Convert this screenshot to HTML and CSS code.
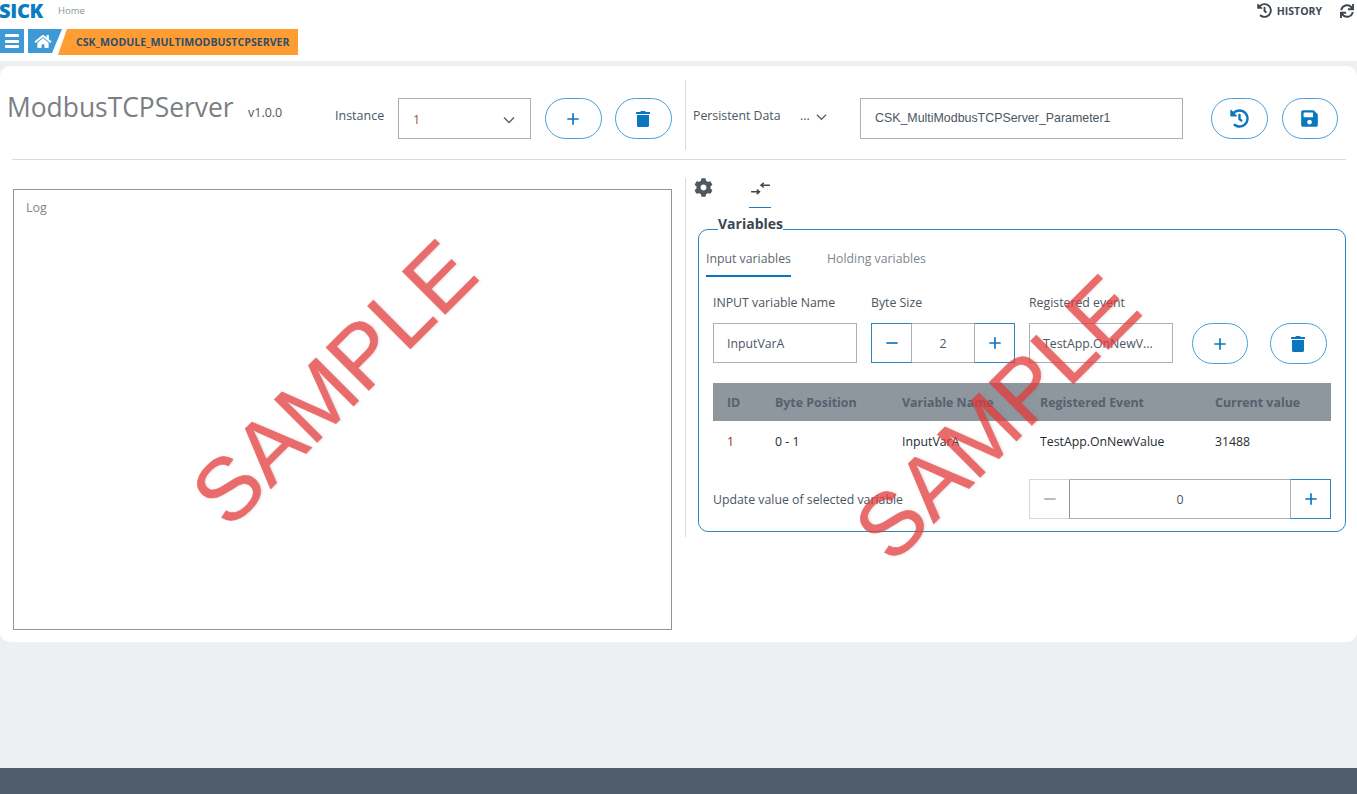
FILE: index.html
```html
<!DOCTYPE html>
<html lang="en">
<head>
<meta charset="utf-8">
<title>ModbusTCPServer</title>
<link rel="stylesheet" href="styles.css">
</head>
<body>
<svg class="defs" aria-hidden="true">
  <symbol id="i-trash" viewBox="0 0 448 512"><path d="M32 464a48 48 0 0 0 48 48h288a48 48 0 0 0 48-48V128H32zM432 32H312l-9.4-18.7A24 24 0 0 0 281.1 0H166.8a23.7 23.7 0 0 0-21.4 13.3L136 32H16A16 16 0 0 0 0 48v32a16 16 0 0 0 16 16h416a16 16 0 0 0 16-16V48a16 16 0 0 0-16-16z"/></symbol>
  <symbol id="i-home" viewBox="0 0 576 512"><path d="M280.37 148.26L96 300.11V464a16 16 0 0 0 16 16l112.06-.29a16 16 0 0 0 15.92-16V368a16 16 0 0 1 16-16h64a16 16 0 0 1 16 16v95.64a16 16 0 0 0 16 16.05L464 480a16 16 0 0 0 16-16V300L295.67 148.26a12.19 12.19 0 0 0-15.3 0zM571.6 251.47L488 182.56V44.05a12 12 0 0 0-12-12h-56a12 12 0 0 0-12 12v72.61L318.47 43a48 48 0 0 0-61 0L4.34 251.47a12 12 0 0 0-1.6 16.9l25.5 31A12 12 0 0 0 45.15 301l235.22-193.74a12.19 12.19 0 0 1 15.3 0L530.9 301a12 12 0 0 0 16.9-1.6l25.5-31a12 12 0 0 0-1.7-16.93z"/></symbol>
  <symbol id="i-save" viewBox="0 0 448 512"><path d="M433.941 129.941l-83.882-83.882A48 48 0 0 0 316.118 32H48C21.49 32 0 53.49 0 80v352c0 26.51 21.49 48 48 48h352c26.51 0 48-21.49 48-48V163.882a48 48 0 0 0-14.059-33.941zM224 416c-35.346 0-64-28.654-64-64 0-35.346 28.654-64 64-64s64 28.654 64 64c0 35.346-28.654 64-64 64zm96-304.52V212c0 6.627-5.373 12-12 12H76c-6.627 0-12-5.373-12-12V108c0-6.627 5.373-12 12-12h228.52c3.183 0 6.235 1.264 8.485 3.515l3.48 3.48A11.996 11.996 0 0 1 320 111.48z"/></symbol>
  <symbol id="i-history" viewBox="0 0 512 512"><path d="M504 255.531c.253 136.64-111.18 248.372-247.82 248.468-59.015.042-113.223-20.53-155.822-54.911-11.077-8.94-11.905-25.541-1.839-35.607l11.267-11.267c8.609-8.609 22.353-9.551 31.891-1.984C173.062 425.135 212.781 440 256 440c101.705 0 184-82.311 184-184 0-101.705-82.311-184-184-184-48.814 0-93.149 18.969-126.068 49.932l50.754 50.754c10.08 10.08 2.941 27.314-11.313 27.314H24c-8.837 0-16-7.163-16-16V38.627c0-14.254 17.234-21.393 27.314-11.314l49.372 49.372C129.209 34.136 189.552 8 256 8c136.81 0 247.747 110.78 248 247.531zm-180.912 78.784l9.823-12.63c8.138-10.463 6.253-25.542-4.21-33.679L288 256.349V152c0-13.255-10.745-24-24-24h-16c-13.255 0-24 10.745-24 24v135.651l65.409 50.874c10.463 8.137 25.541 6.253 33.679-4.21z"/></symbol>
  <symbol id="i-cog" viewBox="0 0 512 512"><path d="M487.4 315.7l-42.6-24.6c4.3-23.2 4.3-47 0-70.2l42.6-24.6c4.9-2.8 7.1-8.6 5.5-14-11.1-35.6-30-67.8-54.7-94.6-3.8-4.1-10-5.1-14.8-2.3L380.8 110c-17.9-15.4-38.5-27.3-60.8-35.1V25.8c0-5.6-3.9-10.5-9.4-11.7-36.7-8.2-74.3-7.8-109.2 0-5.5 1.2-9.4 6.1-9.4 11.7V75c-22.2 7.9-42.8 19.8-60.8 35.1L88.7 85.5c-4.9-2.8-11-1.9-14.8 2.3-24.7 26.7-43.6 58.9-54.7 94.6-1.7 5.4.6 11.2 5.5 14L67.3 221c-4.3 23.2-4.3 47 0 70.2l-42.6 24.6c-4.9 2.8-7.1 8.6-5.5 14 11.1 35.6 30 67.8 54.7 94.6 3.8 4.1 10 5.1 14.8 2.3l42.6-24.6c17.9 15.4 38.5 27.3 60.8 35.1v49.2c0 5.6 3.9 10.5 9.4 11.7 36.7 8.2 74.3 7.8 109.2 0 5.5-1.2 9.4-6.1 9.4-11.7v-49.2c22.2-7.9 42.8-19.8 60.8-35.1l42.6 24.6c4.9 2.8 11 1.9 14.8-2.3 24.7-26.7 43.6-58.9 54.7-94.6 1.5-5.5-.7-11.3-5.6-14.1zM256 336c-44.1 0-80-35.9-80-80s35.9-80 80-80 80 35.9 80 80-35.9 80-80 80z"/></symbol>
  <symbol id="i-sync" viewBox="0 0 512 512"><path d="M440.65 12.57l4 82.77A247.16 247.16 0 0 0 255.83 8C134.73 8 33.91 94.92 12.29 209.82A12 12 0 0 0 24.09 224h49.05a12 12 0 0 0 11.67-9.26 175.91 175.91 0 0 1 317-56.94l-101.46-4.86a12 12 0 0 0-12.57 12v47.41a12 12 0 0 0 12 12H500a12 12 0 0 0 12-12V12a12 12 0 0 0-12-12h-47.37a12 12 0 0 0-11.98 12.57zM255.83 432a175.61 175.61 0 0 1-146-77.8l101.8 4.87a12 12 0 0 0 12.57-12v-47.4a12 12 0 0 0-12-12H12a12 12 0 0 0-12 12V500a12 12 0 0 0 12 12h47.35a12 12 0 0 0 12-12.6l-4.15-82.57A247.17 247.17 0 0 0 255.83 504c121.11 0 221.93-86.92 243.55-201.82a12 12 0 0 0-11.8-14.18h-49.05a12 12 0 0 0-11.67 9.26A175.86 175.86 0 0 1 255.83 432z"/></symbol>
  <symbol id="i-plus" viewBox="0 0 16 16"><path d="M8 1.5v13M1.5 8h13" fill="none" stroke="currentColor" stroke-width="1.9"/></symbol>
  <symbol id="i-minus" viewBox="0 0 16 16"><path d="M1.5 8h13" fill="none" stroke="currentColor" stroke-width="1.9"/></symbol>
  <symbol id="i-chev" viewBox="0 0 12 8"><path d="M1 1.5l5 5 5-5" fill="none" stroke="currentColor" stroke-width="1.5"/></symbol>
  <symbol id="i-swap" viewBox="0 0 20 16"><path d="M0 11.5h8.5M6 9l3 2.5L6 14M20 4.5h-9M13.5 2l-3 2.5L13.5 7" fill="none" stroke="currentColor" stroke-width="1.5"/></symbol>
</svg>

<header class="top">
  <div class="top-row">
    <span class="logo">SICK</span>
    <span class="home-link">Home</span>
    <span class="spacer"></span>
    <svg class="ic-hist"><use href="#i-history"/></svg>
    <span class="history">HISTORY</span>
    <svg class="ic-sync"><use href="#i-sync"/></svg>
  </div>
  <nav class="crumbs">
    <span class="crumb-menu">
      <span class="bars"><i></i><i></i><i></i></span>
    </span>
    <span class="crumb-home"><svg class="ic-home"><use href="#i-home"/></svg></span>
    <span class="crumb-page">CSK_MODULE_MULTIMODBUSTCPSERVER</span>
  </nav>
</header>

<main class="card">
  <section class="head">
    <h1 class="title">ModbusTCPServer</h1>
    <span class="version">v1.0.0</span>
    <span class="lbl-instance">Instance</span>
    <div class="select"><span>1</span><svg class="ic-chev"><use href="#i-chev"/></svg></div>
    <button class="pill pill-a"><svg class="ic-plus"><use href="#i-plus"/></svg></button>
    <button class="pill pill-b"><svg class="ic-trash"><use href="#i-trash"/></svg></button>
    <span class="vline"></span>
    <span class="lbl-persist">Persistent Data</span>
    <span class="dots">...</span>
    <svg class="ic-chev-s"><use href="#i-chev"/></svg>
    <div class="param">CSK_MultiModbusTCPServer_Parameter1</div>
    <button class="pill pill-c"><svg class="ic-history"><use href="#i-history"/></svg></button>
    <button class="pill pill-s"><svg class="ic-save"><use href="#i-save"/></svg></button>
  </section>
  <hr class="rule">
  <section class="body">
    <div class="log">Log</div>
    <div class="right">
      <div class="icon-tabs">
        <svg class="ic-cog"><use href="#i-cog"/></svg>
        <span class="swap-tab"><svg class="ic-swap"><use href="#i-swap"/></svg></span>
      </div>
      <fieldset class="vars">
        <legend>Variables</legend>
        <div class="tabs">
          <span class="tab active">Input variables</span>
          <span class="tab">Holding variables</span>
        </div>
        <div class="form">
          <div class="field f-name">
            <label>INPUT variable Name</label>
            <div class="input">InputVarA</div>
          </div>
          <div class="field f-size">
            <label>Byte Size</label>
            <div class="stepper">
              <span class="step on"><svg class="ic-step"><use href="#i-minus"/></svg></span>
              <span class="step-val">2</span>
              <span class="step on"><svg class="ic-step"><use href="#i-plus"/></svg></span>
            </div>
          </div>
          <div class="field f-event">
            <label>Registered event</label>
            <div class="input">TestApp.OnNewV...</div>
          </div>
          <button class="pill pill-d"><svg class="ic-plus"><use href="#i-plus"/></svg></button>
          <button class="pill pill-e"><svg class="ic-trash"><use href="#i-trash"/></svg></button>
        </div>
        <table class="grid">
          <colgroup>
            <col class="c1"><col class="c2"><col class="c3"><col class="c4"><col class="c5">
          </colgroup>
          <thead>
            <tr><th>ID</th><th>Byte Position</th><th>Variable Name</th><th>Registered Event</th><th>Current value</th></tr>
          </thead>
          <tbody>
            <tr><td class="id">1</td><td>0 - 1</td><td>InputVarA</td><td>TestApp.OnNewValue</td><td>31488</td></tr>
          </tbody>
        </table>
        <div class="update">
          <span class="update-lbl">Update value of selected variable</span>
          <div class="stepper wide">
            <span class="step off"><svg class="ic-step"><use href="#i-minus"/></svg></span>
            <span class="step-val">0</span>
            <span class="step on"><svg class="ic-step"><use href="#i-plus"/></svg></span>
          </div>
        </div>
      </fieldset>
    </div>
  </section>
</main>

<footer class="foot"></footer>

<div class="wm wm-a">SAMPLE</div>
<div class="wm wm-b">SAMPLE</div>
</body>
</html>
```

FILE: styles.css
```css
* { box-sizing: border-box; }
html, body { margin: 0; height: 794px; overflow: hidden; }
body {
  position: relative;
  display: flex;
  flex-direction: column;
  background: #eeeff1;
  font-family: "Open Sans", sans-serif;
  color: #4c5661;
  font-size: 12.3px;
}
.defs { display: none; }
svg { display: block; fill: currentColor; }

.top { height: 61px; background: #fff; flex: none; }
.top-row { display: flex; align-items: center; height: 29px; padding-bottom: 8px; }
.logo { width: 44px; margin-left: -1px; font: 800 20px/21px "Open Sans", sans-serif; letter-spacing: -.3px; color: #0a7cc1; }
.home-link { font-size: 9.5px; color: #8d9499; margin-left: 15px; }
.spacer { flex: 1; }
.ic-hist { width: 15px; height: 15px; color: #3c4650; }
.history { font-weight: 700; font-size: 10.5px; color: #3f4a55; margin: 0 18px 0 5px; }
.ic-sync { width: 14px; height: 14px; color: #3c4650; margin-right: 3px; }

.crumbs { display: flex; height: 26px; }
.crumb-menu, .crumb-home { background: #3e9ad4; color: #fff; display: flex; align-items: center; height: 24px; }
.crumb-menu { width: 24px; justify-content: center; }
.bars { display: flex; flex-direction: column; gap: 2.5px; width: 14px; }
.bars i { height: 3px; background: #fff; border-radius: 1px; }
.crumb-home { width: 34px; margin-left: 4px; padding-left: 6px; clip-path: polygon(0 0, 100% 0, 24px 100%, 0 100%); }
.ic-home { width: 18px; height: 15px; }
.crumb-page {
  width: 240px;
  margin-left: -4px;
  height: 26px;
  background: #ff9d33;
  color: #2f4d6b;
  font-weight: 700;
  font-size: 10.6px;
  line-height: 26px;
  padding-left: 18px;
  clip-path: polygon(9px 0, 100% 0, 100% 100%, 0 100%);
}

.card {
  flex: none;
  height: 576px;
  margin-top: 5px;
  padding-top: 14px;
  background: #fff;
  border-radius: 10px;
}
.head { display: flex; align-items: flex-start; height: 70px; }
.title { margin: 9px 0 0 7px; font-weight: 400; font-size: 26.4px; line-height: 37px; color: #7a7f84; width: 241px; white-space: nowrap; }
.version { width: 87px; margin-top: 24px; font-size: 12.5px; line-height: 17px; }
.lbl-instance { width: 63px; margin-top: 27px; font-size: 12.5px; line-height: 17px; }
.select {
  width: 133px; height: 41px; margin-top: 18px;
  border: 1px solid #a9afb4;
  display: flex; align-items: center; justify-content: space-between;
  padding: 2px 15px 0 14px;
  font-size: 12.5px; color: #8f5a2c;
}
.ic-chev { width: 12px; height: 8px; color: #5d666e; }
.pill {
  width: 56.5px; height: 41px; margin: 18px 0 0;
  padding: 0;
  background: #fff;
  border: 1px solid #4a9fd6;
  border-radius: 21px;
  display: flex; align-items: center; justify-content: center;
  color: #0a76bd;
}
.pill-a { margin-left: 14px; }
.pill-b { margin-left: 13.5px; }
.pill-s { margin-left: 14px; }
.ic-plus { width: 14px; height: 14px; }
.ic-trash { width: 14px; height: 16px; }
.ic-history { width: 19px; height: 19px; }
.ic-save { width: 17px; height: 19px; }
.vline { width: 1px; height: 70px; background: #d9dbdd; margin-left: 13.5px; }
.lbl-persist { width: 107px; margin: 27px 0 0 7px; line-height: 17px; white-space: nowrap; }
.dots { width: 16px; margin-top: 27px; line-height: 17px; }
.ic-chev-s { width: 11px; height: 8px; margin-top: 33px; color: #5d666e; }
.param {
  width: 323px; height: 41px; margin: 18px 0 0 33px;
  border: 1px solid #a9afb4;
  padding-left: 14px;
  font: 12.4px/39px "Liberation Sans", sans-serif;
  color: #4c5661;
}
.pill-c { margin-left: 28px; }
.rule { height: 1px; border: 0; background: #d9dbdd; margin: 9px 11px 0 12px; }

.body { display: flex; align-items: flex-start; padding-left: 13px; }
.log {
  width: 659px; height: 441px; margin-top: 29px;
  border: 1px solid #8f9599;
  padding: 9px 12px;
  color: #7e868c;
  font-size: 12.5px;
  line-height: 17px;
}
.right {
  width: 662px; margin: 18px 0 0 13px;
  border-left: 1px solid #d9dbdd;
  height: 359px;
  padding-left: 12px;
}
.icon-tabs { display: flex; height: 30px; }
.ic-cog { width: 19px; height: 19px; color: #4f575f; margin-left: -4px; }
.swap-tab { width: 22px; height: 30px; margin-left: 36px; border-bottom: 1px solid #1a80c4; padding: 3px 0 0 2px; color: #3c4650; }
.ic-swap { width: 19px; height: 15px; }

.vars {
  width: 648px; height: 318px;
  margin: 6px 0 0 0;
  padding: 0 15px 0 7px;
  border: 1px solid #2c87c0;
  border-radius: 10px;
  min-width: 0;
}
.vars legend { margin-left: 12px; padding: 0 0 12px; font-weight: 700; font-size: 14px; line-height: 19px; color: #3c4650; }
.tabs { display: flex; height: 37px; margin-top: -5px; gap: 36px; }
.tab { height: 37px; padding-top: 10px; line-height: 17px; color: #7e868c; }
.tab.active { color: #5c666f; border-bottom: 2px solid #0a76bd; }
.form { display: flex; align-items: flex-start; padding: 17px 0 0 7px; height: 106px; }
.field { display: flex; flex-direction: column; gap: 9px; width: 144px; }
.field label { line-height: 17px; height: 19px; margin-bottom: 1px; color: #4c5661; white-space: nowrap; }
.f-size { margin-left: 14px; }
.f-event { margin-left: 14px; }
.input { height: 40px; border: 1px solid #a9afb4; line-height: 39px; padding-left: 13px; color: #4c5661; }
.stepper { display: flex; height: 40px; }
.step { width: 41px; height: 40px; border: 1px solid #2c87c0; border-right-color: #a9afb4; display: flex; align-items: center; justify-content: center; color: #0a76bd; flex: none; }
.step + .step-val + .step { border-left-color: #a9afb4; border-right-color: #2c87c0; }
.ic-step { width: 14px; height: 14px; }
.step-val { flex: 1; border-top: 1px solid #a9afb4; border-bottom: 1px solid #a9afb4; text-align: center; line-height: 39px; }
.step.off { border-color: #d4d7da; color: #a9afb4; border-right-color: #8f9599; }
.pill-d { margin: 29px 0 0 18.5px; }
.pill-e { margin: 29px 0 0 22px; }

.grid { margin-left: 7px; width: 618px; border-collapse: collapse; table-layout: fixed; }
.c1 { width: 62px; }
.c2 { width: 127px; }
.c3 { width: 138px; }
.c4 { width: 175px; }
.c5 { width: 116px; }
.grid th { height: 38px; background: #8d979d; color: #56616d; font-size: 12.4px; font-weight: 700; text-align: left; padding: 0; }
.grid td { height: 40px; padding: 0; color: #262c32; }
.grid th:first-child, .grid td:first-child { padding-left: 14px; }
.grid td.id { color: #8f2c1e; }
.update { display: flex; align-items: center; margin: 18px 0 0 7px; height: 40px; }
.update-lbl { width: 316px; flex: none; }
.wide { width: 302px; flex: none; }
.wide .step-val { border-color: #a9afb4; }

.foot { margin-top: auto; height: 26px; background: #4f5d6a; flex: none; }

.wm {
  position: absolute;
  font: 400 88px/1 "Liberation Sans", sans-serif;
  color: #e33a3a;
  -webkit-text-stroke: .6px #e33a3a;
  opacity: .75;
  text-shadow: 1px 1px 3px rgba(120, 120, 120, .3);
  white-space: nowrap;
  transform: translate(-50%, -50%) rotate(-45deg);
}
.wm-a { left: 334px; top: 383px; }
.wm-b { left: 997px; top: 418px; }
```
